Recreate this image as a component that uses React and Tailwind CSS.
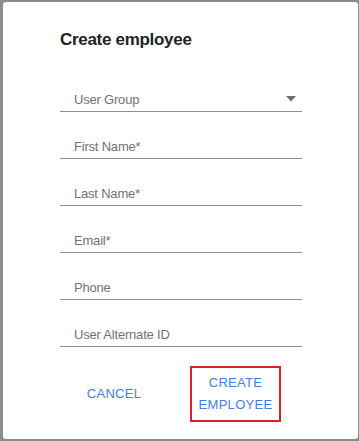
export default function App() {
  const fields = ["First Name*", "Last Name*", "Email*", "Phone", "User Alternate ID"];
  return (
    <div className="w-[359px] h-[441px] bg-[#8c8c8c] pl-[3px] pt-[2px] overflow-hidden" style={{ fontFamily: '"Liberation Sans", Arial, sans-serif' }}>
      <div className="w-[355px] h-[437px] bg-white rounded-[3px] pl-[57px] pt-[28px]">
        <h2 className="text-[17px] font-bold text-[#222] leading-[20px] tracking-[-0.3px]">Create employee</h2>
        <div className="w-[242px] mt-[41px] flex flex-col gap-[26px]">
          <div className="h-[21px] border-b border-[#8f8f8f] flex items-start justify-between pl-[14px] pr-[6px]">
            <span className="text-[13px] text-[#727272] leading-[17px] tracking-[-0.2px]">User Group</span>
            <svg width="10" height="6" viewBox="0 0 10 6" className="mt-[5px]"><path d="M0 0 L10 0 L5 5.5 Z" fill="#6f6f6f" /></svg>
          </div>
          {fields.map((f) => (
            <div key={f} className="h-[21px] border-b border-[#8f8f8f] pl-[14px] flex items-start">
              <span className="text-[13px] text-[#727272] leading-[17px] tracking-[-0.2px]">{f}</span>
            </div>
          ))}
        </div>
        <div className="flex items-center mt-[19px] w-[242px]">
          <div className="w-[108px] flex justify-center">
            <span className="text-[13px] text-[#3f80ea] tracking-[0.3px]">CANCEL</span>
          </div>
          <div className="w-[91px] h-[56px] border-2 border-[#e02020] flex flex-col items-center justify-center ml-[22px]">
            <span className="text-[13px] text-[#3f80ea] tracking-[0.3px] leading-[22px]">CREATE</span>
            <span className="text-[13px] text-[#3f80ea] tracking-[0.3px] leading-[22px]">EMPLOYEE</span>
          </div>
        </div>
      </div>
    </div>
  );
}
